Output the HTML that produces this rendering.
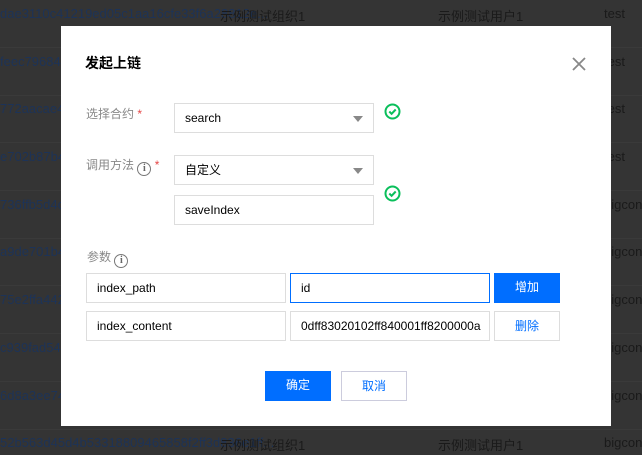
<!DOCTYPE html><html><head><meta charset="utf-8"><style>
html,body{margin:0;width:642px;height:455px;overflow:hidden}
body{background:#343434;font-family:"Liberation Sans","Noto Sans CJK SC",sans-serif;font-size:12px;position:relative}
.r{position:absolute;left:0;width:642px;height:47px;border-bottom:1px solid #3a3a3a;color:#1a1a1a;font-size:13px}
.r span{position:absolute;top:6px;white-space:nowrap}
.a{left:0;color:#1d3357}.b{left:220px}.c{left:438px}.d{left:604px}
.m{position:absolute;left:61px;top:26px;width:550px;height:400px;background:#fff}
.ab{position:absolute}
.lb{color:#888;font-size:12px}
.st{color:#e54545}
.in{position:absolute;box-sizing:border-box;border:1px solid #ddd;height:30px;line-height:28px;padding-left:10px;color:#000;font-size:12px;background:#fff;overflow:hidden;white-space:nowrap}
.arr{position:absolute;right:10px;top:12px;width:0;height:0;border-left:5px solid transparent;border-right:5px solid transparent;border-top:6px solid #888}
.btn{position:absolute;box-sizing:border-box;height:30px;line-height:28px;text-align:center;font-size:12px}
.info{display:inline-block;width:12px;height:12px;border:1.4px solid #777;border-radius:50%;font-size:10px;line-height:12px;text-align:center;color:#666;font-weight:bold;vertical-align:-2px;font-family:"Liberation Serif",serif}
</style></head><body>
<div class="r" style="top:0px"><span class="a">dae3110c41219ed05c1aa16cfe33f6a28812e...</span><span class="b">示例测试组织1</span><span class="c">示例测试用户1</span><span class="d">test</span></div>
<div class="r" style="top:48px"><span class="a">feec79684a</span><span class="d">test</span></div>
<div class="r" style="top:95px"><span class="a">772aacae42</span><span class="d">test</span></div>
<div class="r" style="top:143px"><span class="a">e702b87b45</span><span class="d">test</span></div>
<div class="r" style="top:191px"><span class="a">736ffb5d4c8</span><span class="d">bigcong</span></div>
<div class="r" style="top:238px"><span class="a">a9de701b4e</span><span class="d">bigcong</span></div>
<div class="r" style="top:286px"><span class="a">75e2ffa442</span><span class="d">bigcong</span></div>
<div class="r" style="top:334px"><span class="a">c939fad547</span><span class="d">bigcong</span></div>
<div class="r" style="top:382px"><span class="a">6d8a3ee74</span><span class="d">bigcong</span></div>
<div class="r" style="top:429px"><span class="a">52b563d45d4b53318809465858f2ff3d836e1ff...</span><span class="b">示例测试组织1</span><span class="c">示例测试用户1</span><span class="d">bigcong</span></div>
<div class="m">
<div class="ab" style="left:24px;top:27px;font-size:14px;font-weight:bold;color:#000">发起上链</div>
<svg class="ab" style="left:511px;top:31px" width="14" height="14"><path d="M1 1L13 13M13 1L1 13" stroke="#888" stroke-width="1.8"/></svg>
<div class="ab lb" style="left:25px;top:79px">选择合约 <span class="st">*</span></div>
<div class="in" style="left:113px;top:77px;width:200px">search<div class="arr"></div></div>
<svg class="ab" style="left:323px;top:77px" width="17" height="17"><circle cx="8.5" cy="8.5" r="7" fill="none" stroke="#0abf5b" stroke-width="2"/><path d="M5.3 8.5l2.3 2.3L11.7 6.5" fill="none" stroke="#0abf5b" stroke-width="2"/></svg>
<div class="ab lb" style="left:25px;top:130px">调用方法 <span class="info">i</span> <span class="st">*</span></div>
<div class="in" style="left:113px;top:129px;width:200px">自定义<div class="arr"></div></div>
<svg class="ab" style="left:323px;top:159px" width="17" height="17"><circle cx="8.5" cy="8.5" r="7" fill="none" stroke="#0abf5b" stroke-width="2"/><path d="M5.3 8.5l2.3 2.3L11.7 6.5" fill="none" stroke="#0abf5b" stroke-width="2"/></svg>
<div class="in" style="left:113px;top:169px;width:200px">saveIndex</div>
<div class="ab lb" style="left:26px;top:222px">参数 <span class="info">i</span></div>
<div class="in" style="left:25px;top:247px;width:200px">index_path</div>
<div class="in" style="left:229px;top:247px;width:200px;border-color:#006eff">id</div>
<div class="btn" style="left:433px;top:247px;width:66px;background:#006eff;color:#fff">增加</div>
<div class="in" style="left:25px;top:285px;width:200px">index_content</div>
<div class="in" style="left:229px;top:285px;width:200px">0dff83020102ff840001ff8200000a</div>
<div class="btn" style="left:433px;top:285px;width:66px;border:1px solid #ddd;color:#006eff">删除</div>
<div class="btn" style="left:204px;top:345px;width:66px;background:#006eff;color:#fff">确定</div>
<div class="btn" style="left:280px;top:345px;width:66px;border:1px solid #ccd;color:#006eff">取消</div>
</div>
</body></html>
